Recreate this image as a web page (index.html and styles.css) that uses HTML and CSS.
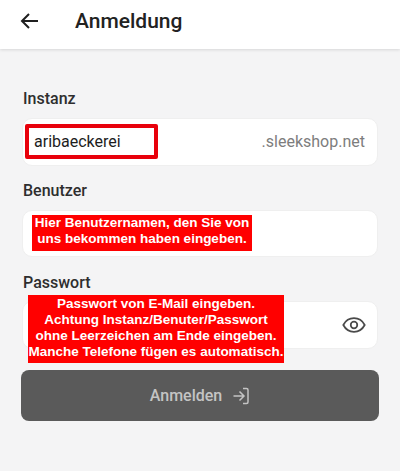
FILE: index.html
```html
<!DOCTYPE html>
<html lang="de">
<head>
    <meta charset="UTF-8">
    <meta name="viewport" content="width=device-width, initial-scale=1.0">
    <title>Anmeldung</title>
    <link rel="stylesheet" href="styles.css">
</head>
<body>

    <header class="topbar">
        <svg class="back-icon" width="24" height="24" viewBox="0 0 24 24" fill="none" stroke="#1f1f1f" stroke-width="2">
            <path d="M21 12H5M12 5l-7 7 7 7"/>
        </svg>
        <h1>Anmeldung</h1>
    </header>

    <form class="login">
        <div class="group">
            <div class="label">Instanz</div>
            <div class="field">
                <span class="value">aribaeckerei</span>
                <span class="suffix">.sleekshop.net</span>
                <div class="mark"></div>
            </div>
        </div>

        <div class="group group-user">
            <div class="label">Benutzer</div>
            <div class="field">
                <div class="note note-user">Hier Benutzernamen, den Sie von<br>uns bekommen haben eingeben.</div>
            </div>
        </div>

        <div class="group group-last">
            <div class="label">Passwort</div>
            <div class="field field-end">
                <div class="note note-pass">Passwort von E-Mail eingeben.<br>Achtung Instanz/Benuter/Passwort<br>ohne Leerzeichen am Ende eingeben.<br>Manche Telefone fügen es automatisch.</div>
                <svg class="eye-icon" width="24" height="24" viewBox="0 0 22 22" fill="none" stroke="#4a4a4a" stroke-width="1.6">
                    <path d="M1.200 11C3.400 6.900 6.900 4.800 11 4.800s7.600 2.100 9.800 6.200c-2.200 4.100-5.700 6.200-9.800 6.200S3.400 15.100 1.200 11z"/>
                    <circle cx="11" cy="11" r="3"/>
                </svg>
            </div>
        </div>

        <button type="button" class="submit">
            Anmelden
            <svg width="18" height="18" viewBox="0 0 18 18" fill="none" stroke="#c4c4c4" stroke-width="1.5">
                <path d="M1.500 9H11.500M7.500 4.500L12 9l-4.500 4.500M11 1.500h3.500a1.500 1.500 0 0 1 1.500 1.500v12a1.500 1.500 0 0 1-1.500 1.500H11"/>
            </svg>
        </button>
    </form>

</body>
</html>
```

FILE: styles.css
```css
html, body {
    height: 100%;
}

body {
    margin: 0;
    font-family: 'Roboto', sans-serif;
    background: #f4f4f5;
    color: #2b2b2b;
    overflow: hidden;
}

.topbar {
    display: flex;
    align-items: center;
    gap: 34px;
    height: 49px;
    padding: 0 0 8px 17px;
    box-sizing: border-box;
    background: #fff;
    box-shadow: 0 1px 3px rgba(0, 0, 0, 0.12);
}

.topbar h1 {
    margin: 0;
    font-size: 21px;
    font-weight: 500;
    color: #222;
}

.login {
    display: flex;
    flex-direction: column;
    padding: 40px 21px 0;
}

.group {
    margin-bottom: 15px;
}

.group-user {
    margin-bottom: 16px;
}

.group-last {
    margin-bottom: 21.5px;
}

.label {
    margin: 0 0 9px 2px;
    font-size: 16px;
    line-height: 20px;
    font-weight: 500;
    color: #2e2e2e;
}

.group-last .label {
    margin-bottom: 8px;
}

.field {
    position: relative;
    display: flex;
    align-items: center;
    justify-content: space-between;
    height: 47.5px;
    margin: 0 1px;
    padding: 0 12px 0 11px;
    box-sizing: border-box;
    background: #fff;
    border: 1px solid #efefef;
    border-radius: 10px;
}

.field-end {
    justify-content: flex-end;
}

.eye-icon {
    margin-right: -1px;
}

.value {
    font-size: 16px;
    color: #1d1d1d;
}

.suffix {
    font-size: 16px;
    color: #7d7d7d;
}

/* red annotations pasted over the screenshot */
.mark {
    position: absolute;
    left: 2px;
    top: 5px;
    width: 125px;
    height: 27px;
    border: 4px solid #e8000b;
    border-radius: 2px;
}

.note {
    position: absolute;
    background: #ff0000;
    color: #fff;
    font-family: 'Liberation Sans', sans-serif;
    font-weight: bold;
    font-size: 13.5px;
    line-height: 16px;
    text-align: center;
    white-space: nowrap;
}

.note-user {
    left: 9px;
    top: 4.500px;
    width: 220px;
    height: 36px;
    box-sizing: border-box;
}

.note-pass {
    left: 5px;
    top: -7px;
    width: 256px;
    height: 68px;
    padding-top: 1px;
    box-sizing: border-box;
}

.submit {
    display: flex;
    align-items: center;
    justify-content: center;
    gap: 10px;
    height: 51px;
    padding: 0;
    border: none;
    border-radius: 8px;
    background: #5a5a5a;
    color: #c4c4c4;
    font-family: 'Roboto', sans-serif;
    font-size: 16px;
    font-weight: 500;
}
```
